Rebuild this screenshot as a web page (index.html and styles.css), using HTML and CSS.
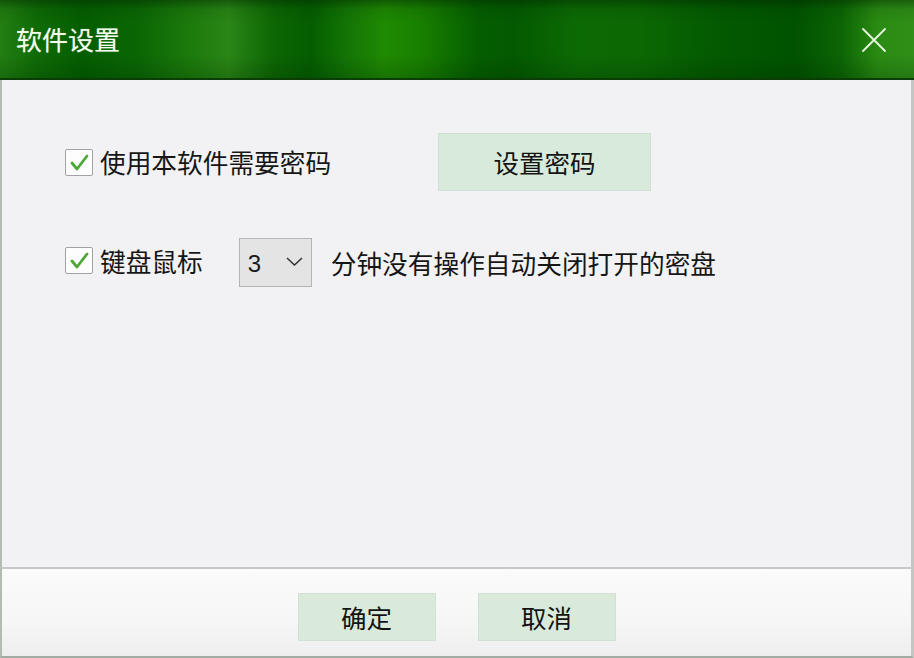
FILE: index.html
```html
<!DOCTYPE html>
<html lang="zh-CN">
<head>
<meta charset="utf-8">
<title>软件设置</title>
<link rel="stylesheet" href="styles.css">
</head>
<body>
<div class="window">
  <header class="titlebar">
    <span class="title">软件设置</span>
    <svg class="close" width="24" height="24" viewBox="0 0 24 24" aria-label="关闭">
      <path d="M1 1 L23 23 M23 1 L1 23" stroke="#eafbe2" stroke-width="1.8" fill="none" stroke-linecap="round"/>
    </svg>
  </header>
  <main class="content">
    <div class="row row-password">
      <label class="check-label">
        <span class="checkbox">
          <svg width="26" height="25" viewBox="0 0 26 25"><path d="M6 13 L11 19 L21 6" stroke="#4ea838" stroke-width="2.8" fill="none" stroke-linecap="round" stroke-linejoin="round"/></svg>
        </span>
        <span class="label-text">使用本软件需要密码</span>
      </label>
      <button class="btn btn-set">设置密码</button>
    </div>
    <div class="row row-timeout">
      <label class="check-label">
        <span class="checkbox">
          <svg width="26" height="25" viewBox="0 0 26 25"><path d="M6 13 L11 19 L21 6" stroke="#4ea838" stroke-width="2.8" fill="none" stroke-linecap="round" stroke-linejoin="round"/></svg>
        </span>
        <span class="label-text">键盘鼠标</span>
      </label>
      <div class="select">
        <span class="select-value">3</span>
        <svg class="chevron" width="17" height="9" viewBox="0 0 17 9"><path d="M1 1 L8.5 8 L16 1" stroke="#333" stroke-width="1.5" fill="none"/></svg>
      </div>
      <span class="label-text after">分钟没有操作自动关闭打开的密盘</span>
    </div>
  </main>
  <footer class="footer">
    <button class="btn btn-foot">确定</button>
    <button class="btn btn-foot">取消</button>
  </footer>
</div>
</body>
</html>
```
FILE: styles.css
```css
* { box-sizing: border-box; }

html, body {
  margin: 0;
  padding: 0;
  width: 914px;
  height: 658px;
  overflow: hidden;
  font-family: "Noto Sans CJK SC", "Noto Sans", sans-serif;
  color: #161616;
}

.window {
  width: 914px;
  height: 658px;
  display: flex;
  flex-direction: column;
  background: #f2f2f4;
}

.titlebar {
  height: 80px;
  flex: none;
  display: flex;
  align-items: center;
  justify-content: space-between;
  padding: 0 28px 0 16px;
  border-bottom: 2px solid #0b3d06;
  background:
    linear-gradient(to bottom, rgba(0, 35, 0, 0.45) 0, rgba(0, 35, 0, 0.1) 12%, rgba(0, 0, 0, 0) 30%, rgba(0, 0, 0, 0) 70%, rgba(0, 30, 0, 0.2) 100%),
    linear-gradient(to right,
      #237f12 0,
      #0f6b06 4%,
      #045e00 9%,
      #0a6604 15%,
      #1d7b0c 21%,
      #2a8616 25%,
      #0c6603 30%,
      #045d00 34%,
      #137505 38%,
      #1f8a02 42%,
      #188000 46%,
      #055f00 52%,
      #035900 56%,
      #0c6a04 63%,
      #0b6803 70%,
      #035a00 78%,
      #005200 87%,
      #0c6504 92%,
      #2a8b12 96%,
      #2f8f18 100%);
}

.title {
  font-size: 26px;
  line-height: 1;
  color: #f3fdee;
  text-shadow: 0 0 1px rgba(255, 255, 255, 0.4);
}

.close {
  display: block;
  margin-top: 1px;
}

.content {
  flex: 1;
  padding: 53px 0 0 63px;
  display: flex;
  flex-direction: column;
  gap: 47px;
  border-left: 2px solid #b3bbb3;
  border-right: 3px solid #c4c6c4;
}

.row {
  display: flex;
  align-items: center;
}

.row-password { height: 58px; }
.row-timeout { height: 49px; }

.check-label {
  display: flex;
  align-items: center;
  gap: 7px;
}

.row-password .check-label { width: 373px; }
.row-timeout .check-label { margin-top: -4px; }

.checkbox {
  width: 28px;
  height: 27px;
  border: 1px solid #a2a2a2;
  border-radius: 2px;
  background: #fdfdfd;
  display: flex;
  align-items: center;
  justify-content: center;
  flex: none;
}

.checkbox svg { display: block; }

.label-text {
  font-size: 25.7px;
  line-height: 1;
  white-space: nowrap;
}

.label-text.after { margin-left: 19px; }

.btn {
  font-family: "Noto Sans CJK SC", "Noto Sans", sans-serif;
  font-size: 25.5px;
  line-height: 1;
  color: #141414;
  background: #d8eadb;
  border: 1px solid #d0e0d2;
  border-radius: 0;
  padding: 0;
  display: flex;
  align-items: center;
  justify-content: center;
}

.btn-set {
  width: 213px;
  height: 58px;
}

.select {
  width: 73px;
  height: 49px;
  margin-left: 36px;
  background: #e4e4e4;
  border: 1px solid #b4b4b4;
  display: flex;
  align-items: center;
  justify-content: space-between;
  padding: 2px 8px 0 8px;
}

.select-value {
  font-family: "Liberation Sans", "Noto Sans", sans-serif;
  font-size: 24px;
  line-height: 1;
  color: #1a1a1a;
}

.chevron { display: block; margin-top: -4px; }

.footer {
  height: 91px;
  flex: none;
  display: flex;
  justify-content: center;
  gap: 42px;
  padding-top: 24px;
  border-top: 2px solid #c6c9c9;
  border-left: 2px solid #b3bbb3;
  border-right: 3px solid #c4c6c4;
  border-bottom: 2px solid #a3aca3;
  background: linear-gradient(to bottom, #fbfbfb 0, #f6f6f6 60%, #eeeeee 100%);
}

.btn-foot {
  width: 138px;
  height: 48px;
  background: #d9eadb;
}
```
